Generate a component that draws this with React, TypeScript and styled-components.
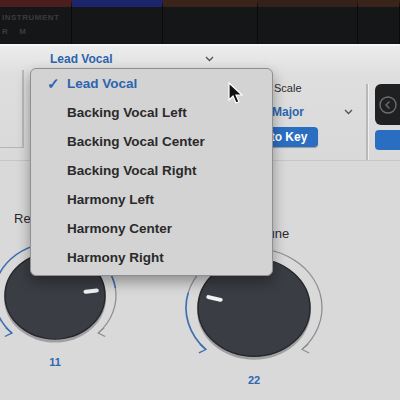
import React from "react";
import styled, { createGlobalStyle } from "styled-components";

const GlobalStyle = createGlobalStyle`
  html, body {
    margin: 0;
    padding: 0;
    background: #151617;
  }
  body {
    font-family: "Liberation Sans", Arial, sans-serif;
  }
`;

const voices = [
  "Lead Vocal",
  "Backing Vocal Left",
  "Backing Vocal Center",
  "Backing Vocal Right",
  "Harmony Left",
  "Harmony Center",
  "Harmony Right",
];

const tracks = [
  { width: 72, color: "#4b1d1c" },
  { width: 91, color: "#1c246c" },
  { width: 95, color: "#3a2318" },
  { width: 100, color: "#34221a" },
  { width: 42, color: "#3a2419" },
];

const Chevron: React.FC = () => (
  <svg width="9" height="6" viewBox="0 0 9 6">
    <path d="M1 1l3.5 3.5L8 1" fill="none" stroke="#555" strokeWidth="1.4" />
  </svg>
);

type KnobProps = { knob: number; ring: number; angle: number };

// knob seen a little from above, so it is drawn squashed vertically
const Knob: React.FC<KnobProps> = ({ knob, ring, angle }) => {
  const size = (ring + 4) * 2;
  const c = size / 2;
  const pt = (deg: number, rad: number) => {
    const a = (deg * Math.PI) / 180;
    return [c + Math.cos(a) * rad, c + Math.sin(a) * rad];
  };
  const [sx, sy] = pt(135, ring);
  const [vx, vy] = pt(angle, ring);
  const [ex, ey] = pt(45, ring);
  const [ix1, iy1] = pt(angle, knob * 0.62);
  const [ix2, iy2] = pt(angle, knob * 0.84);
  const blueSweep = (angle + 360 - 135) % 360;
  const bigBlue = blueSweep > 180 ? 1 : 0;
  const bigGray = 270 - blueSweep > 180 ? 1 : 0;
  return (
    <svg width={size} height={size * 0.87} viewBox={`0 0 ${size} ${size}`} preserveAspectRatio="none">
      <path d={`M${vx} ${vy} A${ring} ${ring} 0 ${bigGray} 1 ${ex} ${ey}`} fill="none" stroke="#8d8f94" strokeWidth="1.3" />
      <path d={`M${sx} ${sy} A${ring} ${ring} 0 ${bigBlue} 1 ${vx} ${vy}`} fill="none" stroke="#3f70b2" strokeWidth="1.7" />
      <path d={`M${sx - 6} ${sy - 6} L${sx} ${sy} L${sx - 7} ${sy + 4}`} fill="none" stroke="#3f70b2" strokeWidth="1.5" />
      <path d={`M${ex + 6} ${ey - 6} L${ex} ${ey} L${ex + 7} ${ey + 4}`} fill="none" stroke="#8d8f94" strokeWidth="1.3" />
      <circle cx={c} cy={c + 3} r={knob + 1} fill="#1d1f23" opacity="0.3" />
      <circle cx={c} cy={c} r={knob} fill="#3a3d44" stroke="#26282c" strokeWidth="1.5" />
      <line x1={ix1} y1={iy1} x2={ix2} y2={iy2} stroke="#f2f2f2" strokeWidth="4.5" strokeLinecap="round" />
    </svg>
  );
};

const Cursor: React.FC = () => (
  <CursorWrap>
    <svg width="16" height="22" viewBox="0 0 16 22">
      <path d="M1 1v17l4-4 3 7 3-1.3-3-6.7h6z" fill="#111" stroke="#fff" strokeWidth="1.2" />
    </svg>
  </CursorWrap>
);

export default function App() {
  return (
    <>
      <GlobalStyle />
      <Page>
        <TrackBar>
          {tracks.map((t, i) => (
            <Track key={i} $width={t.width} $color={t.color}>
              {i === 0 && (
                <>
                  <TrackName>INSTRUMENT</TrackName>
                  <TrackName>R&nbsp;&nbsp;&nbsp;&nbsp;M</TrackName>
                </>
              )}
            </Track>
          ))}
        </TrackBar>

        <Panel>
          <HeaderRow>
            <VoiceSelect>
              <SelectText>Lead Vocal</SelectText>
              <Chevron />
            </VoiceSelect>
          </HeaderRow>

          <ControlsRow>
            <SideStub />
            <Spacer />
            <ScaleGroup>
              <ScaleLabel>Scale</ScaleLabel>
              <ScaleSelect>
                <SelectText>Major</SelectText>
                <Chevron />
              </ScaleSelect>
              <BlueButton>Set to Key</BlueButton>
            </ScaleGroup>
            <Divider />
            <ButtonStack>
              <DarkTile>
                <svg width="20" height="20" viewBox="0 0 20 20">
                  <circle cx="10" cy="10" r="8" fill="none" stroke="#6b6d70" strokeWidth="1.4" />
                  <path d="M11.5 6.5L8 10l3.5 3.5" fill="none" stroke="#6b6d70" strokeWidth="1.4" />
                </svg>
              </DarkTile>
              <SmallBlue />
            </ButtonStack>
          </ControlsRow>

          <KnobRow>
            <KnobBlock $top={0}>
              <KnobLabel $inset={24} $gap={13}>Response</KnobLabel>
              <Knob knob={50} ring={61} angle={-8} />
              <KnobValue>11</KnobValue>
            </KnobBlock>
            <KnobBlock $top={15}>
              <KnobLabel $inset={78} $gap={4}>Tune</KnobLabel>
              <Knob knob={56} ring={68} angle={-165} />
              <KnobValue>22</KnobValue>
            </KnobBlock>
          </KnobRow>
        </Panel>

        <Menu>
          {voices.map((v, i) => (
            <MenuItem key={v} $selected={i === 0}>
              <Check>{i === 0 ? "✓" : ""}</Check>
              {v}
            </MenuItem>
          ))}
        </Menu>
        <Cursor />
      </Page>
    </>
  );
}

const Page = styled.div`
  position: relative;
  width: 400px;
  height: 400px;
  overflow: hidden;
  background: #d9d9da;
`;

const TrackBar = styled.div`
  display: flex;
  height: 44px;
  background: #151617;
`;

const Track = styled.div<{ $width: number; $color: string }>`
  width: ${(p) => p.$width}px;
  flex-shrink: 0;
  border-top: 7px solid ${(p) => p.$color};
  border-right: 1px solid #0b0b0c;
  padding: 6px 0 0 2px;
  box-sizing: border-box;
  display: flex;
  flex-direction: column;
  gap: 5px;
`;

const TrackName = styled.span`
  font-size: 8px;
  font-weight: 700;
  color: #3a3c3f;
  letter-spacing: 0.5px;
`;

const Panel = styled.div`
  display: flex;
  flex-direction: column;
  background: linear-gradient(#ececec 0px, #dedede 30px, #d9d9da 120px);
  border-top: 2px solid #f6f6f6;
  height: 356px;
`;

const HeaderRow = styled.div`
  height: 24px;
  display: flex;
  align-items: center;
  padding-left: 50px;
`;

const VoiceSelect = styled.div`
  width: 164px;
  display: flex;
  align-items: center;
  justify-content: space-between;
  padding-top: 2px;
`;

const SelectText = styled.span`
  font-size: 12px;
  font-weight: 700;
  color: #2c64ae;
`;

const ControlsRow = styled.div`
  display: flex;
  height: 90px;
  border-bottom: 1px solid #c6c6c6;
`;

const SideStub = styled.div`
  width: 24px;
  height: 78px;
  border-right: 2px solid #b9b9b9;
  border-bottom: 1px solid #b5b5b5;
  box-sizing: border-box;
`;

const Spacer = styled.div`
  flex: 1;
`;

const ScaleGroup = styled.div`
  width: 116px;
  display: flex;
  flex-direction: column;
  padding-top: 12px;
  margin-right: 12px;
`;

const ScaleLabel = styled.span`
  margin-left: 36px;
  font-size: 11px;
  color: #2b2b2b;
`;

const ScaleSelect = styled.div`
  display: flex;
  align-items: center;
  justify-content: space-between;
  margin-left: 34px;
  margin-right: 1px;
  margin-top: 11px;
`;

const BlueButton = styled.div`
  margin-top: 8px;
  width: 80px;
  height: 20px;
  border-radius: 4px;
  background: #2a6ec2;
  color: #fff;
  font-size: 12px;
  font-weight: 700;
  display: flex;
  align-items: center;
  justify-content: center;
  box-shadow: 0 1px 1px rgba(0, 0, 0, 0.3);
`;

const Divider = styled.div`
  width: 2px;
  height: 76px;
  margin-top: 14px;
  background: #b8b8b8;
  border-right: 1px solid #efefef;
`;

const ButtonStack = styled.div`
  width: 25px;
  margin-left: 6px;
  padding-top: 14px;
  display: flex;
  flex-direction: column;
  gap: 5px;
`;

const DarkTile = styled.div`
  height: 41px;
  border-radius: 6px 0 0 6px;
  background: #1f2022;
  display: flex;
  align-items: center;
  justify-content: center;
`;

const SmallBlue = styled.div`
  height: 20px;
  border-radius: 4px 0 0 4px;
  background: #2a6ec2;
`;

const KnobRow = styled.div`
  display: flex;
  gap: 62px;
  margin-left: -10px;
  margin-top: 50px;
`;

const KnobBlock = styled.div<{ $top: number }>`
  display: flex;
  flex-direction: column;
  align-items: center;
  margin-top: ${(p) => p.$top}px;
`;

const KnobLabel = styled.span<{ $inset: number; $gap: number }>`
  align-self: flex-start;
  margin-left: ${(p) => p.$inset}px;
  margin-bottom: ${(p) => p.$gap}px;
  font-size: 13px;
  line-height: 15px;
  color: #2a2a2a;
`;

const KnobValue = styled.span`
  font-size: 11px;
  font-weight: 700;
  color: #2f67b0;
  margin-top: 4px;
`;

const Menu = styled.div`
  position: absolute;
  left: 30px;
  top: 68px;
  width: 241px;
  padding: 0 0 3px;
  background: #d3d3d4;
  border: 1px solid #8f8f91;
  border-radius: 6px;
  box-shadow: 0 6px 14px rgba(0, 0, 0, 0.35);
  display: flex;
  flex-direction: column;
`;

const MenuItem = styled.div<{ $selected: boolean }>`
  height: 29px;
  display: flex;
  align-items: center;
  padding-left: 16px;
  font-size: 13.5px;
  font-weight: 700;
  color: ${(p) => (p.$selected ? "#2c64ae" : "#2a2a2a")};
`;

const Check = styled.span`
  width: 20px;
  font-size: 15px;
  color: #2c64ae;
`;

const CursorWrap = styled.div`
  position: absolute;
  left: 228px;
  top: 82px;
`;
